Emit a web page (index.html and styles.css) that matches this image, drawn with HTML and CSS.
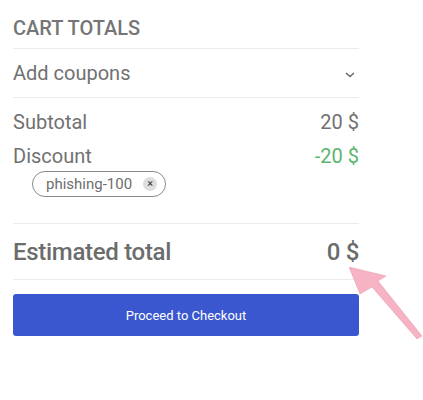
FILE: index.html
```html
<!DOCTYPE html>
<html>
<head>
<meta charset="utf-8">
<link rel="stylesheet" href="styles.css">
</head>
<body>
<div class="page">
  <div class="cart">
    <div class="title">CART TOTALS</div>
    <div class="coupons">
      <span>Add coupons</span>
      <svg class="chev" width="10" height="6" viewBox="0 0 10 6"><path d="M1 1 L5 4.5 L9 1" fill="none" stroke="#666" stroke-width="1.4"/></svg>
    </div>
    <div class="totals">
      <div class="row"><span>Subtotal</span><span>20 $</span></div>
      <div class="row"><span>Discount</span><span class="green">-20 $</span></div>
      <div class="chips">
        <span class="chip">phishing-100<span class="x">×</span></span>
      </div>
    </div>
    <div class="estimated"><span>Estimated total</span><span>0 $</span></div>
    <button class="btn">Proceed to Checkout</button>
  </div>
  <svg class="arrow" width="90" height="90" viewBox="0 0 90 90">
    <polygon points="0,0 37,9 29,14 73,69 68,72 23,20 11,27" fill="#f5b3c3" stroke="#e9a0b3" stroke-width="0.6"/>
  </svg>
</div>
</body>
</html>
```
FILE: styles.css
```css
html, body { margin: 0; padding: 0; background: #fff; }
body { font-family: Roboto, "Liberation Sans", sans-serif; color: #717171; }
.page { position: relative; width: 423px; height: 400px; }
.cart { width: 346px; padding-left: 13px; padding-top: 16px; }
.title { font-size: 20px; font-weight: 500; line-height: 24px; padding-bottom: 8px; border-bottom: 1px solid #ebebeb; color: #757575; }
.coupons { display: flex; justify-content: space-between; align-items: center; height: 48px; font-size: 20px; border-bottom: 1px solid #ebebeb; }
.chev { margin-right: 4px; margin-top: 4px; }
.totals { padding-top: 12px; padding-bottom: 26px; border-bottom: 1px solid #ebebeb; }
.row { display: flex; justify-content: space-between; font-size: 20px; line-height: 24px; height: 34px; }
.green { color: #5bb56e; }
.chips { padding-left: 19px; margin-top: -7px; }
.chip { display: inline-flex; align-items: center; height: 24px; padding: 0 8px 0 13px; border: 1px solid #8a8a8a; border-radius: 13px; font-size: 15px; color: #6d6d6d; }
.x { display: inline-flex; align-items: center; justify-content: center; width: 14px; height: 14px; margin-left: 11px; border-radius: 50%; background: #dedede; color: #333; font-size: 11px; line-height: 14px; }
.estimated { display: flex; justify-content: space-between; align-items: center; height: 55px; font-size: 24px; font-weight: 500; letter-spacing: -0.3px; border-bottom: 1px solid #ebebeb; color: #6c6c6c; }
.btn { display: block; width: 346px; height: 42px; margin-top: 14px; border: 0; border-radius: 3px; background: #3b57cf; color: #fff; font-family: Roboto, "Liberation Sans", sans-serif; font-size: 13px; }
.arrow { position: absolute; left: 349px; top: 267px; }
```
